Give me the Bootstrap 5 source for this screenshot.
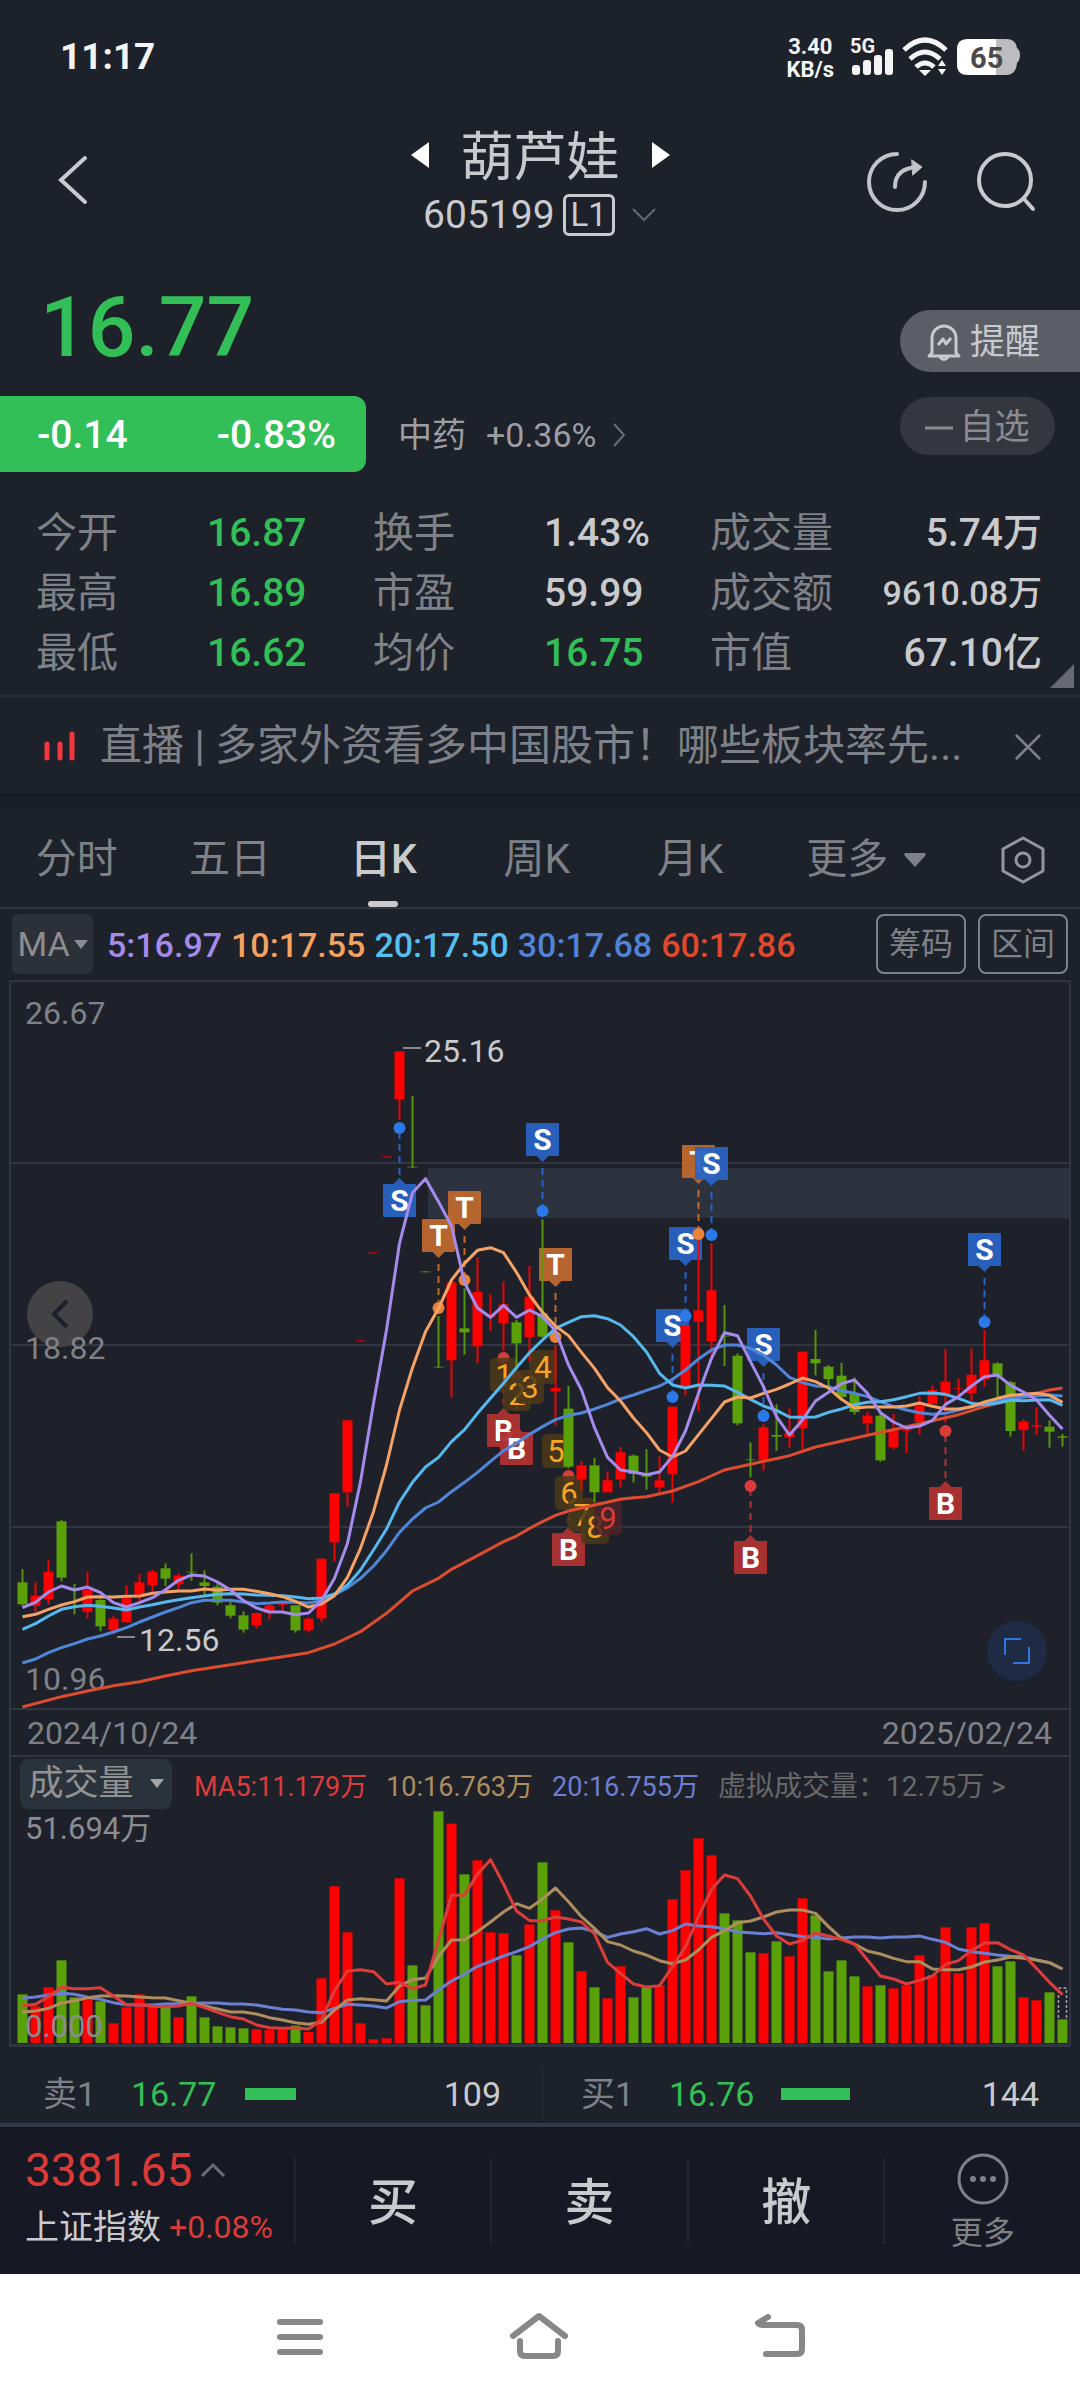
<!DOCTYPE html>
<html lang="zh-CN">
<head>
<meta charset="utf-8">
<meta name="viewport" content="width=device-width, initial-scale=1">
<title>葫芦娃 605199</title>
<link href="https://cdn.jsdelivr.net/npm/bootstrap@5.3.0/dist/css/bootstrap.min.css" rel="stylesheet">
<style>
:root{--bg:#1d2129;--line:#2f3541;--fg:#c9cacd;--dim:#7e8188;--up:#33bf58;--red:#db3a36}
body{background:var(--bg);color:var(--fg);font-family:Roboto,"Noto Sans CJK SC",sans-serif;line-height:1.2}
button{background:none;border:0;padding:0;color:inherit;font:inherit}
a{color:inherit;text-decoration:none}
svg{display:block;flex-shrink:0;overflow:visible}
.dim{color:var(--dim)}.up{color:var(--up)}.down{color:var(--red)}
.t27{font-size:27px}.t32{font-size:32px}.t34{font-size:34px}.t39{font-size:39px}.t42{font-size:42px}
.status{height:112px;padding:3px 60px 0;color:#f4f4f5;font-weight:700}
.status .clock{font-size:37px}
.status .rate{font-size:22px;line-height:23px;text-align:center}
.top-bar{padding:10px 44px 0}
.stock-name{font-size:53px;line-height:60px;font-weight:400;padding-top:6px}
.stock-code{line-height:54px;font-size:39px}
.lv{border:3px solid var(--fg);border-radius:6px;font-size:33px;line-height:36px;padding:0 5px}
.price{font-size:84px;line-height:80px;font-weight:500;padding-left:40px;margin:46px 0 28px}
.chg{background:var(--up);color:#fff;height:76px;width:366px;padding:3px 30px 0 37px;border-radius:0 12px 12px 0;font-weight:500}
.sector{padding-top:3px;color:#9c9ea3}
.pills{padding-top:68px;gap:25px}
.remind{background:#5c5e66;height:62px;width:180px;border-radius:31px 0 0 31px;padding:3px 0 0 26px;gap:8px;font-size:35px}
.fav{background:#34373e;color:#8a8c92;height:58px;width:155px;border-radius:29px;font-size:35px;padding-top:3px}
.facts{padding:31px 38px 12px 36px;border-bottom:2px solid #282c35}
.facts dl{line-height:60px}
.facts dd{font-weight:500}
.facts .dim{font-size:41px;font-weight:400}
.fold{right:6px;bottom:7px}
.news{height:96px;padding:3px 38px 0 44px}
.gap-band{height:15px;background:#181c26}
.tabs{height:101px;border-bottom:2px solid #31363f}
.tabs button{font-size:41px;color:var(--dim);padding-top:4px}
.tabs .tab{width:14.2%}
.tabs .more{width:18.4%}
.tabs .active{color:var(--fg);font-weight:500;position:relative}
.tabs .active::after{content:"";position:absolute;left:50%;bottom:0;width:30px;height:6px;margin-left:-15px;border-radius:3px;background:var(--fg)}
.ma-row{padding:5px 12px 6px;height:71px}
.ma-pick{background:#2c3038;border-radius:6px;color:#8c8d90;width:81px;height:60px;margin-right:14px}
.ma-vals{gap:9px;padding-top:2px;font-weight:500}
.tool{border:2px solid var(--dim)!important;border-radius:8px;width:90px;height:60px;font-size:32px;color:var(--dim)}
.panel{margin:0 9px;border:2px solid var(--line);border-bottom-width:3px;background:#1e2129}
.mid-label{position:absolute;left:14px;bottom:341px;line-height:38px}
.dates{border-top:2px solid var(--line);border-bottom:2px solid var(--line);height:49px;padding:2px 17px 0 16px}
.vol-head{height:54px;padding:0 10px 0 9px;font-size:27px}
.vol-pick{background:#2a323c;border-radius:8px;width:152px;height:50px;font-size:35px;color:#929292}
.vol-vals{gap:19px;padding:6px 0 0 22px}
.vol-vals a{font-size:28px;color:#686868}
.float-btn{position:absolute;border-radius:50%}
.prev{left:16px;bottom:361px;width:66px;height:66px;background:#434346}
.full{right:22px;bottom:27px;width:60px;height:60px;background:#1f2b44}
.depth{padding-top:18px;height:76px}
.depth>div{padding:0 41px 0 43px}
.depth>div+div{border-left:2px solid #20252e;padding-left:37px}
.depth-bar{height:12px;background:var(--up)}
.dock{border-top:4px solid #303745;background:#161923;height:151px}
.dock .idx{width:27.2%;padding:0 0 8px 25px}
.idx-now{font-size:46px;line-height:50px;margin-bottom:12px}
.dock .act{font-size:50px;font-weight:500;height:86px;border-left:2px solid #20242d;padding-top:4px}
.nav-sys{background:#fff;height:126px;padding:0 266px 0 260px}
</style>
</head>
<body>
<div class="status d-flex align-items-center justify-content-between">
  <span class="clock">11:17</span>
  <div class="d-flex align-items-center gap-3">
    <div class="rate">3.40<br>KB/s</div>
    <svg width="170" height="42" viewBox="0 0 170 42" role="img" aria-label="5G 65%">
      <text x="0" y="16" font-size="20" fill="#f4f4f5">5G</text>
      <g fill="#f4f4f5"><rect x="2" y="28" width="8" height="10" rx="3"/><rect x="13" y="23" width="8" height="15" rx="3"/><rect x="24" y="18" width="8" height="20" rx="3"/><rect x="35" y="12" width="8" height="26" rx="3"/></g>
      <g fill="none" stroke="#f4f4f5" stroke-width="5"><path d="M54 13q21-20 42 0M60 22q15-14 30 0M66 30q9-8 18 0"/></g>
      <path d="M69 33h12l-6 6zM88 29l4-6 4 6zM88 32h8l-4 6z" fill="#f4f4f5"/>
      <path d="M118 2h38q10 0 11 9 3 2 3 7t-3 8q-1 12-11 12h-38z" fill="#bdbdbf"/>
      <path d="M118 2h28v36h-28q-11 0-11-10V12q0-10 11-10z" fill="#fff"/>
      <text x="120" y="31" font-size="29" fill="#4a4a4c">65</text>
    </svg>
  </div>
</div>

<header class="top-bar d-flex align-items-center">
  <div class="col"><button class="ms-2 ps-1" aria-label="返回"><svg width="32" height="52" viewBox="0 0 32 52" fill="none" stroke="#c9cacd" stroke-width="4" stroke-linecap="round"><path d="M29 4 5 26l24 22"/></svg></button></div>
  <div class="text-center">
    <div class="d-flex align-items-center justify-content-center gap-4">
      <button aria-label="上一只"><svg width="18" height="26" viewBox="0 0 18 26"><path d="M18 0v26L0 13z" fill="#fff"/></svg></button>
      <h1 class="stock-name m-0 px-2">葫芦娃</h1>
      <button aria-label="下一只"><svg width="18" height="26" viewBox="0 0 18 26"><path d="M0 0v26l18-13z" fill="#fff"/></svg></button>
    </div>
    <div class="stock-code d-flex align-items-center justify-content-center">
      <span>605199</span><span class="lv ms-2 me-3 my-0">L1</span>
      <svg width="26" height="16" viewBox="0 0 26 16" fill="none" stroke="#666970" stroke-width="2"><path d="m2 2 11 11L24 2"/></svg>
    </div>
  </div>
  <div class="col d-flex justify-content-end align-items-center">
    <button class="me-5" aria-label="分享"><svg width="62" height="62" viewBox="0 0 62 62" fill="none" stroke="#c3c4c7" stroke-width="4" stroke-linecap="round"><path d="M31 3a28 28 0 1 0 28 28"/><path d="M29 36c0-12 7-19 22-20"/><path d="m46 9 10 7-9 8z" fill="#c3c4c7" stroke-width="1"/></svg></button>
    <button aria-label="搜索"><svg width="60" height="62" viewBox="0 0 60 62" fill="none" stroke="#c9cacd" stroke-width="4" stroke-linecap="round"><circle cx="29" cy="29" r="26"/><path d="m49 49 8 9"/></svg></button>
  </div>
</header>

<section class="d-flex justify-content-between">
  <div>
    <div class="price up">16.77</div>
    <div class="d-flex align-items-center">
      <div class="chg t39 d-flex align-items-center justify-content-between"><span>-0.14</span><span>-0.83%</span></div>
      <a href="#" class="sector t34 d-flex align-items-center"><span class="mx-3 ps-3">中药</span><span class="ps-1">+0.36%</span>
      <svg class="ms-3" width="14" height="26" viewBox="0 0 14 26" fill="none" stroke="#696c73" stroke-width="2"><path d="m2 2 10 11L2 24"/></svg></a>
    </div>
  </div>
  <div class="pills d-flex flex-column">
    <button class="remind d-flex align-items-center">
      <svg width="36" height="38" viewBox="0 0 36 38" fill="none" stroke="#c9cacd" stroke-width="3" stroke-linejoin="round"><path d="M6 29V14a12 12 0 0 1 24 0v15l3 3H3zM13 32q5 7 10 0M12 21l5-6 3 5 5-6"/></svg>提醒</button>
    <button class="fav d-flex align-items-center justify-content-center"><svg class="me-1" width="30" height="4"><path d="M0 2h28" stroke="#8a8c92" stroke-width="3"/></svg>自选</button>
  </div>
</section>

<section class="facts position-relative t39">
  <dl class="d-flex m-0"><dt class="dim" style="width:17%">今开</dt><dd class="up m-0" style="width:16.5%">16.87</dd><dt class="dim" style="width:17%">换手</dt><dd class="m-0" style="width:16.5%">1.43%</dd><dt class="dim">成交量</dt><dd class="m-0 ms-auto">5.74万</dd></dl>
  <dl class="d-flex m-0"><dt class="dim" style="width:17%">最高</dt><dd class="up m-0" style="width:16.5%">16.89</dd><dt class="dim" style="width:17%">市盈</dt><dd class="m-0" style="width:16.5%">59.99</dd><dt class="dim">成交额</dt><dd class="m-0 ms-auto t34">9610.08万</dd></dl>
  <dl class="d-flex m-0"><dt class="dim" style="width:17%">最低</dt><dd class="up m-0" style="width:16.5%">16.62</dd><dt class="dim" style="width:17%">均价</dt><dd class="up m-0" style="width:16.5%">16.75</dd><dt class="dim">市值</dt><dd class="m-0 ms-auto">67.10亿</dd></dl>
  <svg class="fold position-absolute" width="24" height="24"><path d="M24 0v24H0z" fill="#666970"/></svg>
</section>

<section class="news d-flex align-items-center justify-content-between t42 dim">
  <a href="#" class="d-flex align-items-center text-nowrap"><svg width="32" height="28" viewBox="0 0 32 28"><path d="M3 12v14M16 12v14M28 2v24" stroke="#f0383e" stroke-width="5" stroke-linecap="round"/></svg><span class="ms-4">直播 | 多家外资看多中国股市！哪些板块率先...</span></a>
  <button aria-label="关闭"><svg width="28" height="28" viewBox="0 0 30 30" stroke="#7e8188" stroke-width="3"><path d="m2 2 26 26M28 2 2 28"/></svg></button>
</section>
<div class="gap-band"></div>

<nav class="tabs d-flex">
  <button class="tab">分时</button><button class="tab">五日</button><button class="tab active">日K</button><button class="tab">周K</button><button class="tab">月K</button>
  <button class="more d-flex align-items-center justify-content-center gap-3">更多<svg width="22" height="14"><path d="M2 0h18q3 0 1 3l-9 10q-1 1-2 0L1 3Q-1 0 2 0" fill="#7e8188"/></svg></button>
  <button class="col d-flex align-items-center justify-content-center" aria-label="设置"><svg width="46" height="48" viewBox="0 0 46 48" fill="none" stroke="#94969b" stroke-width="3" stroke-linejoin="round"><path d="m23 2 20 11v22L23 46 3 35V13z"/><circle cx="23" cy="24" r="7"/></svg></button>
</nav>

<section class="ma-row d-flex align-items-center">
  <button class="ma-pick t34 d-flex align-items-center justify-content-center">MA<svg class="ms-1" width="14" height="9"><path d="M0 0h14L7 9z" fill="#8c8d90"/></svg></button>
  <div class="ma-vals t34 d-flex flex-fill"><span style="color:#a58aec">5:16.97</span><span style="color:#f5a25e">10:17.55</span><span style="color:#55bff2">20:17.50</span><span style="color:#5183d6">30:17.68</span><span style="color:#e0492b">60:17.86</span></div>
  <button class="tool me-2">筹码</button><button class="tool ms-1">区间</button>
</section>

<main class="panel">
  <div class="position-relative">
    <svg id="kline" width="100%" viewBox="11 982 1058 726" font-size="32"></svg>
    <button class="float-btn prev d-flex align-items-center justify-content-center" aria-label="向前"><svg width="20" height="30" viewBox="0 0 20 30" fill="none" stroke="#1d2028" stroke-width="4"><path d="M17 2 4 15l13 13"/></svg></button>
    <span class="mid-label t32 dim">18.82</span>
    <button class="float-btn full d-flex align-items-center justify-content-center" aria-label="全屏"><svg width="28" height="28" viewBox="0 0 28 28" fill="none" stroke="#2f74e0" stroke-width="2"><path d="M2 18V2h16M10 26h16V10"/></svg></button>
  </div>
  <div class="dates dim t32 d-flex align-items-center justify-content-between"><span>2024/10/24</span><span>2025/02/24</span></div>
  <div class="vol-head d-flex align-items-center text-nowrap">
    <button class="vol-pick d-flex align-items-center justify-content-center gap-3">成交量<svg width="14" height="10"><path d="M0 0h14L7 9z" fill="#a5a5a5"/></svg></button>
    <div class="vol-vals d-flex align-items-center"><span style="color:#dd3c3c">MA5:11.179万</span><span style="color:#ae8d5e">10:16.763万</span><span style="color:#6b80d2">20:16.755万</span>
    <a href="#">虚拟成交量：12.75万 &gt;</a></div>
  </div>
  <svg id="volume" width="100%" viewBox="11 1811 1058 233" font-size="31"></svg>
</main>

<section class="depth t34 d-flex">
  <div class="col d-flex align-items-center"><span class="dim" style="width:88px">卖1</span><span class="up" style="width:114px">16.77</span><span class="depth-bar" style="width:51px"></span><span class="ms-auto">109</span></div>
  <div class="col d-flex align-items-center"><span class="dim" style="width:88px">买1</span><span class="up" style="width:112px">16.76</span><span class="depth-bar" style="width:69px"></span><span class="ms-auto">144</span></div>
</section>

<footer class="dock d-flex align-items-center">
  <div class="idx">
    <div class="idx-now down d-flex align-items-center">3381.65<svg class="ms-2" width="26" height="16" viewBox="0 0 26 16" fill="none" stroke="#696c73" stroke-width="3"><path d="M2 14 13 3l11 11"/></svg></div>
    <div class="d-flex align-items-center text-nowrap gap-2"><span class="t34">上证指数</span><span class="t32 down">+0.08%</span></div>
  </div>
  <button class="act col">买</button><button class="act col">卖</button><button class="act col">撤</button>
  <button class="act col d-flex flex-column align-items-center justify-content-center dim fw-normal"><svg width="54" height="54" viewBox="0 0 54 54"><circle cx="27" cy="27" r="24" fill="none" stroke="#7e8188" stroke-width="3"/><g fill="#7e8188"><circle cx="17" cy="27" r="3"/><circle cx="27" cy="27" r="3"/><circle cx="37" cy="27" r="3"/></g></svg><span class="t32 mt-2">更多</span></button>
</footer>

<nav class="nav-sys d-flex align-items-center justify-content-between">
  <button class="ps-3" aria-label="任务"><svg width="48" height="40" viewBox="0 0 48 40"><path d="M4 5h40M4 20h40M4 35h40" stroke="#878787" stroke-width="6" stroke-linecap="round"/></svg></button>
  <button aria-label="主页"><svg width="60" height="46" viewBox="0 0 60 46" fill="none" stroke="#878787" stroke-width="6" stroke-linecap="round" stroke-linejoin="round"><path d="M4 22 30 2l26 20"/><path d="M11 27v10q0 5 5 5h28q5 0 5-5V27"/></svg></button>
  <button class="pe-2" aria-label="返回上级"><svg width="52" height="44" viewBox="0 0 52 44" fill="none" stroke="#878787" stroke-width="6" stroke-linecap="round" stroke-linejoin="round"><path d="M14 2 4 8q1 2 5 2h34q5 0 5 5v19q0 5-5 5H12"/></svg></button>
</nav>

<script src="https://cdn.jsdelivr.net/npm/bootstrap@5.3.0/dist/js/bootstrap.bundle.min.js"></script>
<script>
// One column per trading day; price levels are thirds of a chart unit below y = 1330.
const X = i => 22.5 + 13 * i, K = v => 1330 + v / 3, V = v => 1730 + v / 3;
const RED = '#ff0000', GREEN = '#5aa008';
// direction, high, body top, body bottom, low
const candles = `g 717 757 823 829|r 757 797 828 846|r 690 725 808 823|g 570 574 743 754|g 762 779 781 853|r 726 779 845 865|g 808 810 889 904|r 858 866 901 913|r 766 805 877 877|r 732 757 800 823|r 720 725 766 784|g 700 715 746 768|r 730 737 763 778|g 670 725 727 752|g 721 757 768 795|g 757 770 818 826|g 814 826 857 865|g 844 856 899 908|r 848 849 886 895|r 822 827 849 868|r 820 822 824 847|g 826 826 901 908|r 862 866 901 908|r 686 686 865 877|r 490 490 637 695|r 271 271 487 530|r 31 31 34 34|r -233 -233 -230 -230|r -521 -521 -518 -518|r -836 -836 -692 -630|g -702 -490 -487 -487|g -176 -176 -173 -173|g -42 110 113 113|r -143 -143 91 203|g -125 -5 7 74|r -218 -114 49 101|r -107 -42 -40 2|r -146 -77 -20 62|g -30 -23 40 120|r -192 -100 22 95|g -332 -50 20 23|r 45 174 184 287|g 168 236 410 415|r 394 406 448 480|g 384 406 487 516|r 424 451 487 487|r 351 367 448 473|g 373 377 432 458|g 357 434 440 479|r 379 451 472 487|r 230 230 433 518|r -13 -13 173 197|r -270 -59 -25 243|r -260 -119 34 80|g -75 17 19 108|g 70 77 280 286|g 337 388 390 442|r 283 292 391 422|g 223 315 320 362|r 235 308 322 353|r 65 65 295 358|g 0 87 100 136|g 105 110 147 170|g 99 137 201 210|g 142 190 246 254|r 246 257 280 310|g 252 257 391 395|r 252 300 352 358|r 285 298 302 370|r 198 227 276 314|r 166 180 222 224|r 57 155 198 278|r 145 174 177 208|r 55 134 190 213|r 0 91 148 170|g 97 100 140 200|g 153 157 303 320|r 267 275 300 362|r 232 286 290 314|g 271 290 305 353|g 312 319 323 350`.split('|').map(s => s.split(' '));
const ma5 = [833,817,786,768,780,771,788,818,831,818,803,779,751,735,738,756,780,812,834,846,846,854,849,812,745,640,455,220,0,-260,-412,-454,-385,-312,-142,-66,-38,-74,-38,-60,-40,2,105,180,293,382,420,426,434,426,379,303,190,85,8,17,95,170,260,315,270,213,187,161,150,190,248,276,294,288,271,223,200,168,140,135,166,186,210,256,297];
const ma10 = [860,853,838,825,815,801,800,801,799,798,790,786,783,783,777,781,778,778,784,791,800,814,831,822,797,742,655,545,405,240,113,5,-65,-150,-200,-239,-247,-232,-173,-105,-53,-12,17,67,115,173,213,264,308,360,381,363,314,265,216,201,204,190,178,162,144,155,174,208,234,231,231,231,228,219,229,237,237,230,216,205,196,193,190,196,217];
const ma20 = [898,881,858,838,830,826,829,834,840,831,824,816,809,803,798,793,791,792,795,796,797,801,806,804,792,765,720,660,597,516,457,411,382,335,299,250,205,160,113,68,30,-5,-23,-40,-43,-34,-15,20,66,130,165,174,165,166,168,187,208,228,241,261,262,261,247,237,224,217,215,209,200,190,189,193,205,220,224,219,211,212,210,209,226];
const ma30 = [999,987,968,953,941,927,918,906,893,876,861,846,833,818,811,811,811,816,821,819,816,817,819,812,795,773,745,708,662,607,567,534,516,485,457,427,394,362,340,313,290,269,256,249,237,223,207,195,181,168,148,120,87,60,45,45,55,75,105,142,158,168,170,182,190,200,215,230,240,248,253,250,240,230,222,213,205,201,198,195,198];
const ma60 = [[0,1131],[3,1100],[5,1083],[7,1067],[9,1055],[11,1038],[13,1022],[15,1010],[17,998],[20,980],[22,968],[24,942],[26,905],[28,850],[30,783],[32,745],[33,718],[35,677],[37,635],[38,618],[39,595],[40,575],[41,556],[42,543],[44,525],[46,508],[47,503],[48,500],[50,483],[52,455],[54,420],[56,403],[59,377],[61,351],[65,316],[68,290],[70,272],[72,254],[74,230],[76,210],[78,190],[79,180],[80,174]];
const vol = [793,829,772,691,802,800,814,880,832,793,826,832,862,799,862,889,892,895,898,900,898,887,906,745,469,607,880,928,925,445,706,826,244,281,433,391,607,610,676,583,397,541,637,724,772,805,709,802,772,766,508,421,325,376,550,571,667,670,634,679,505,556,724,691,739,769,766,775,766,676,735,592,730,592,580,709,694,802,811,787,868];
const v5 = [827,823,800,772,776,776,773,798,824,824,829,830,828,820,833,847,860,867,885,893,895,894,897,870,782,723,719,725,762,757,776,765,630,496,495,433,389,462,543,572,572,561,567,576,612,697,730,762,771,767,710,650,560,478,435,446,498,567,618,642,631,609,618,629,642,690,738,747,762,751,738,703,692,662,639,638,659,675,715,757,794];
const v10 = [846,843,835,819,812,803,798,797,798,801,803,804,812,820,828,837,846,846,852,863,870,878,883,877,840,810,806,809,813,768,749,744,680,630,629,605,576,546,521,535,507,474,515,560,595,635,645,663,675,692,701,690,660,622,602,578,573,561,546,540,540,550,590,625,642,663,672,685,695,695,717,719,719,711,696,690,681,685,690,698,717];
const v20 = [805,801,795,790,793,802,808,818,824,825,825,822,821,820,819,819,822,822,825,832,838,840,846,848,835,823,825,828,834,815,811,810,780,753,733,709,694,678,665,650,627,608,597,594,605,622,612,605,596,612,602,582,588,590,596,606,608,611,608,614,620,622,627,624,621,621,624,621,621,618,628,637,657,665,670,675,679,680,690,698,717];
const line = (pts, f, c) => `<polyline fill="none" stroke="${c}" stroke-width="3" stroke-linejoin="round" points="${pts.map((p, i) => Array.isArray(p) ? X(p[0]) + ',' + f(p[1]) : X(i) + ',' + f(p)).join(' ')}"/>`;
const tint = {S: ['#2863c4', '#2b78e8'], T: ['#c0692f', '#ea8338'], B: ['#b03232', '#d93b38']};
// letter, day, top of the flag, y of the dot
const flags = [['S',29,1184,1128],['T',32,1219,1308],['T',34,1191,1280],['S',40,1123,1211],['T',41,1248,1337],['S',50,1309,1397],['S',51,1227,1316],['T',52,1145,1234],['S',53,1147,1235],['S',57,1328,1416],['S',74,1233,1322],['B',37,1414,1358],['B',38,1432,1377],['B',42,1533,1476],['B',56,1541,1486],['B',71,1487,1431]];
const counts = [[504,1375],[517,1394],[530,1387],[543,1367],[556,1451],[569,1493],[582,1515],[595,1527],[608,1518]];
let k = '<rect x="428" y="1168" width="641" height="50" fill="#2d333e"/>';
for (const y of [1163, 1345, 1527]) k += `<path d="M11 ${y}H1069" stroke="#2f3541" stroke-width="2"/>`;
k += '<g fill="#7e8188"><text x="25" y="1024">26.67</text><text x="25" y="1690">10.96</text></g>';
for (const [t, i, top, dot] of flags) {
  const x = X(i), below = dot > top, c = tint[t];
  const tip = below ? `M${x - 6} ${top + 33}l6 6 6-6z` : `M${x - 6} ${top}l6-6 6 6z`;
  k += `<path d="M${x} ${below ? top + 45 : top - 9}V${dot}" stroke="${c[0]}" stroke-width="2" stroke-dasharray="7 5"/><g opacity=".94"><rect x="${x - 16.5}" y="${top}" width="33" height="33" rx="1" fill="${c[0]}"/><path d="${tip}" fill="${c[0]}"/></g><text x="${x}" y="${top + 27}" font-size="30" font-weight="700" text-anchor="middle" fill="#fff">${t}</text><circle cx="${x}" cy="${dot}" r="6" fill="${c[1]}"/>`;
}
counts.forEach(([x, y], n) => {
  const c = n === 8 ? ['#4a2327', '#d93b38'] : ['#4c3819', '#fba423'];
  k += `<rect x="${x - 14}" y="${y - 17}" width="28" height="34" rx="5" fill="${c[0]}" opacity=".85"/><text x="${x}" y="${y + 11}" font-size="31" text-anchor="middle" fill="${c[1]}">${n + 1}</text>`;
});
candles.forEach(([d, h, a, b, l], i) => {
  const c = d === 'r' ? RED : GREEN;
  k += `<path d="M${X(i)} ${K(h)}V${K(l)}" stroke="${c}" stroke-width="2" opacity=".9"/><rect x="${X(i) - 5}" y="${K(a)}" width="10" height="${Math.max(1, (b - a) / 3)}" fill="${c}" opacity="${b - a < 4 ? .7 : 1}"/>`;
});
k += line(ma60, K, '#dc4c30') + line(ma30, K, '#5086d8') + line(ma20, K, '#55b8ee') + line(ma10, K, '#f5a266') + line(ma5, K, '#a58cec');
k += '<path d="M403 1048h18M117 1637h18" stroke="#85878c" stroke-width="2"/><g fill="#c9cacd"><text x="424" y="1062">25.16</text><text x="139" y="1651">12.56</text></g>';
document.getElementById('kline').innerHTML = k;
let v = '';
vol.forEach((t, i) => v += `<rect x="${X(i) - 5}" y="${V(t)}" width="10" height="${2043 - V(t)}" fill="${candles[i][0] === 'r' ? RED : GREEN}"/>`);
v += `<path d="M1058.500 2018v-30h8v30" fill="none" stroke="#a0a2a6" stroke-width="1.500" stroke-dasharray="3 2"/>`;
v += line(v20, V, '#6b80d2') + line(v10, V, '#ae8d5e') + line(v5, V, '#dd3c3c');
v += '<g fill="#8a8c91"><text x="25" y="1839">51.694万</text><text x="25" y="2037">0.000</text></g>';
document.getElementById('volume').innerHTML = v;
</script>
</body>
</html>
